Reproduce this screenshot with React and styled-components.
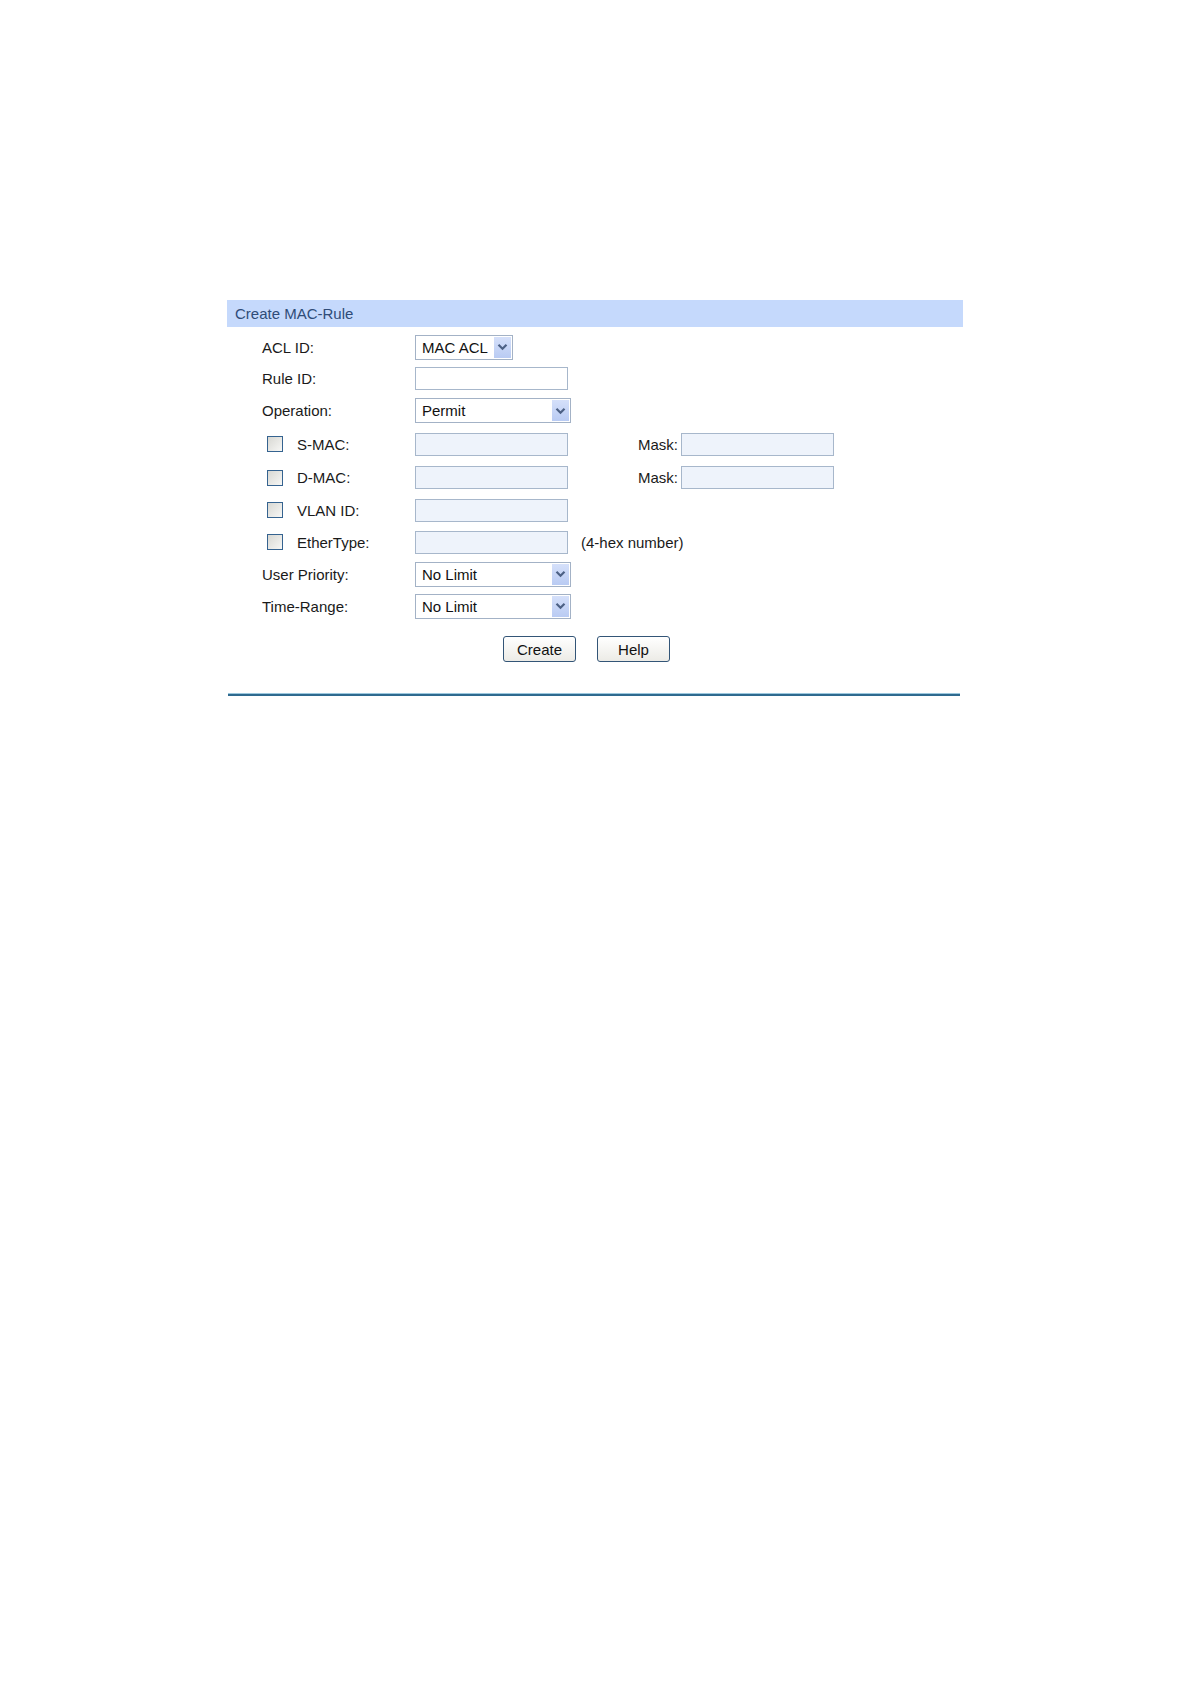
import React from 'react'
import styled, { createGlobalStyle } from 'styled-components'

const GlobalStyle = createGlobalStyle`
    body {
        margin: 0;
        background: #ffffff;
        font-family: "Liberation Sans", Arial, sans-serif;
    }
`

const Chevron = () => (
    <svg width="11" height="8" viewBox="0 0 11 8">
        <path d="M1.5 1.8 L5.5 5.8 L9.5 1.8" fill="none" stroke="#4d6185" strokeWidth="2.2" />
    </svg>
)

const Select = ({ value, width }) => (
    <SelectBox w={width}>
        <SelectText>{value}</SelectText>
        <ArrowBtn>
            <Chevron />
        </ArrowBtn>
    </SelectBox>
)

const App = () => {
    return (
        <>
            <GlobalStyle />
            <Page>
                <Panel>
                    <Header>Create MAC-Rule</Header>
                    <Form>
                        <Row h={32}>
                            <Label>ACL ID:</Label>
                            <Select value="MAC ACL" width={98} />
                        </Row>
                        <Row h={31}>
                            <Label>Rule ID:</Label>
                            <Input />
                        </Row>
                        <Row h={33}>
                            <Label>Operation:</Label>
                            <Select value="Permit" width={156} />
                        </Row>
                        <Row h={34}>
                            <Label>
                                <Check />
                                S-MAC:
                            </Label>
                            <Input disabled />
                            <MaskLabel>Mask:</MaskLabel>
                            <Input disabled />
                        </Row>
                        <Row h={33}>
                            <Label>
                                <Check />
                                D-MAC:
                            </Label>
                            <Input disabled />
                            <MaskLabel>Mask:</MaskLabel>
                            <Input disabled />
                        </Row>
                        <Row h={32}>
                            <Label>
                                <Check />
                                VLAN ID:
                            </Label>
                            <Input disabled />
                        </Row>
                        <Row h={32}>
                            <Label>
                                <Check />
                                EtherType:
                            </Label>
                            <Input disabled />
                            <Hint>(4-hex number)</Hint>
                        </Row>
                        <Row h={32}>
                            <Label>User Priority:</Label>
                            <Select value="No Limit" width={156} />
                        </Row>
                        <Row h={32}>
                            <Label>Time-Range:</Label>
                            <Select value="No Limit" width={156} />
                        </Row>
                    </Form>
                    <Buttons>
                        <Button>Create</Button>
                        <Button>Help</Button>
                    </Buttons>
                    <Divider />
                </Panel>
            </Page>
        </>
    )
}

export default App

const Page = styled.div`
    padding: 300px 0 0 227px;
    min-height: 1684px;
    box-sizing: border-box;
`

const Panel = styled.div`
    width: 736px;
`

const Header = styled.div`
    height: 27px;
    background: #c5d9fc;
    color: #2f4c78;
    font-size: 15px;
    line-height: 27px;
    padding-left: 8px;
`

const Form = styled.div`
    padding: 4px 0 0 35px;
    display: flex;
    flex-direction: column;
`

const Row = styled.div`
    height: ${({ h }) => h}px;
    display: flex;
    align-items: center;
    font-size: 15px;
    color: #1a1a1a;
`

const Label = styled.div`
    width: 153px;
    flex-shrink: 0;
    display: flex;
    align-items: center;
`

const Check = styled.span`
    width: 14px;
    height: 14px;
    margin: 0 14px 0 5px;
    border: 1px solid #356390;
    background: linear-gradient(135deg, #d8d8d3, #f7f7f5);
`

const Input = styled.div`
    width: 153px;
    height: 23px;
    flex-shrink: 0;
    box-sizing: border-box;
    border: 1px solid #a7b7cb;
    background: ${({ disabled }) => (disabled ? '#eef3fb' : '#ffffff')};
`

const SelectBox = styled.div`
    width: ${({ w }) => w}px;
    height: 25px;
    box-sizing: border-box;
    border: 1px solid #a3b2c6;
    background: #ffffff;
    display: flex;
    align-items: center;
    justify-content: space-between;
    padding: 0 1px 0 6px;
`

const SelectText = styled.span`
    font-size: 15px;
    color: #111;
`

const ArrowBtn = styled.span`
    width: 17px;
    height: 21px;
    background: linear-gradient(#d5e0fa, #b9cbf3);
    display: flex;
    align-items: center;
    justify-content: center;
`

const MaskLabel = styled.span`
    margin: 0 4px 0 70px;
    width: 39px;
`

const Hint = styled.span`
    margin-left: 13px;
`

const Buttons = styled.div`
    margin-top: 14px;
    padding-left: 276px;
    display: flex;
    gap: 21px;
`

const Button = styled.button`
    width: 73px;
    height: 26px;
    border: 1px solid #335577;
    border-radius: 3px;
    background: linear-gradient(#ffffff, #ecebe6);
    font-family: "Liberation Sans", Arial, sans-serif;
    font-size: 15px;
    color: #111;
    padding: 0;
`

const Divider = styled.div`
    margin: 31px 3px 0 1px;
    height: 3px;
    background: #2f6a8f;
    border-top: 1px solid #9cc8de;
    box-sizing: border-box;
`
